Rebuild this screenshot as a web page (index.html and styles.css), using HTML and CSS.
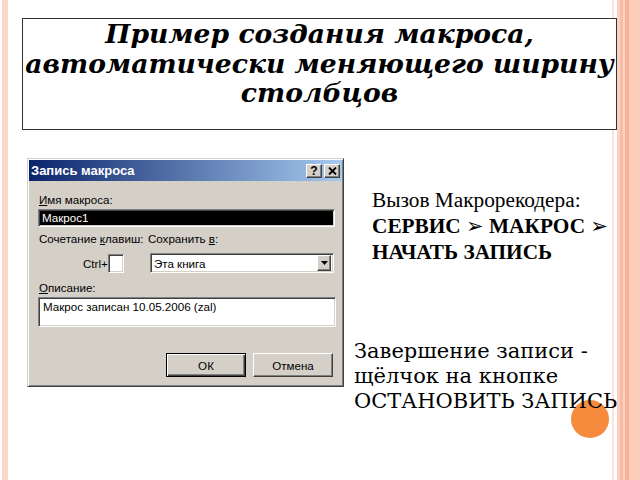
FILE: index.html
```html
<!DOCTYPE html>
<html lang="ru">
<head>
<meta charset="utf-8">
<title>Пример создания макроса</title>
<link rel="stylesheet" href="styles.css">
</head>
<body>
<div class="slide">
  <div class="title">Пример создания макроса,<br>автоматически меняющего ширину<br>столбцов</div>
  <div class="content">
    <div class="dialog">
      <div class="titlebar">
        <span class="tb-text">Запись макроса</span>
        <span class="tb-btns">
          <span class="tb-btn">?</span>
          <span class="tb-btn"><svg width="9" height="8" viewBox="0 0 9 8"><path d="M1 0.5 L8 7.5 M8 0.5 L1 7.5" stroke="#000" stroke-width="1.8"/></svg></span>
        </span>
      </div>
      <div class="dlg-body">
        <div class="lbl lbl-first"><u>И</u>мя макроса:</div>
        <div class="field field-name">Макрос1</div>
        <div class="row2">
          <div class="col-left">
            <div class="lbl">Сочетание <u>к</u>лавиш:</div>
            <div class="ctrl"><span>Ctrl+</span><span class="field keybox"></span></div>
          </div>
          <div class="col-right">
            <div class="lbl">Сохранить <u>в</u>:</div>
            <div class="field combo"><span class="combo-text">Эта книга</span><span class="dd"><svg width="7" height="4" viewBox="0 0 7 4"><path d="M0 0 H7 L3.5 4 Z" fill="#000"/></svg></span></div>
          </div>
        </div>
        <div class="lbl lbl-desc"><u>О</u>писание:</div>
        <div class="field desc">Макрос записан 10.05.2006 (zal)</div>
        <div class="buttons">
          <div class="btn btn-default">ОК</div>
          <div class="btn">Отмена</div>
        </div>
      </div>
    </div>
    <div class="side">
      <div class="call">
        <div>Вызов Макрорекодера:</div>
        <div class="strong">СЕРВИС <span class="arrow">➢</span> МАКРОС <span class="arrow">➢</span></div>
        <div class="strong">НАЧАТЬ ЗАПИСЬ</div>
      </div>
      <div class="finish">
        <div>Завершение записи -</div>
        <div>щёлчок на кнопке</div>
        <div>ОСТАНОВИТЬ ЗАПИСЬ</div>
      </div>
    </div>
  </div>
  <div class="dot"></div>
</div>
</body>
</html>
```
FILE: styles.css
```css
html, body {
  margin: 0;
  padding: 0;
}
body {
  width: 640px;
  height: 480px;
  overflow: hidden;
  background: linear-gradient(to right,
    #fff 0 2px, #fcd8cb 2px 8px, #fff 8px 612px,
    #fde3da 612px 614px, #fff 614px 617px,
    #fcd0bf 617px 620px, #f9bba4 620px 623px,
    #fcd6c8 623px 625px, #f8b195 625px 629px,
    #fccdbb 629px 640px);
}
.slide {
  position: relative;
  width: 640px;
  height: 480px;
  padding-top: 18px;
  box-sizing: border-box;
}
.title {
  margin-left: 22px;
  width: 595px;
  height: 112px;
  box-sizing: border-box;
  border: 1px solid #333;
  background: #fff;
  font-family: "DejaVu Serif", serif;
  font-weight: bold;
  font-style: italic;
  font-size: 26.6px;
  line-height: 29.5px;
  text-align: center;
  color: #000;
  padding-top: 0;
  white-space: nowrap;
}
.content {
  display: flex;
  margin-top: 28px;
}
.dialog {
  margin-left: 27px;
  width: 317px;
  height: 229px;
  box-sizing: border-box;
  background: #d4d0c8;
  border: 1px solid;
  border-color: #d4d0c8 #404040 #404040 #d4d0c8;
  box-shadow: inset 1px 1px #fff, inset -1px -1px #808080;
  padding: 1px;
  font-family: "Liberation Sans", Arial, sans-serif;
  font-size: 11.6px;
  color: #000;
}
.titlebar {
  height: 21px;
  display: flex;
  align-items: center;
  justify-content: space-between;
  padding: 0 2px 0 2px;
  background: linear-gradient(to right, #0a246a, #a6caf0);
}
.tb-text {
  color: #fff;
  font-weight: bold;
  font-size: 13px;
}
.tb-btns {
  display: flex;
  gap: 2px;
}
.tb-btn {
  width: 16px;
  height: 14px;
  box-sizing: border-box;
  background: #d4d0c8;
  border: 1px solid;
  border-color: #fff #404040 #404040 #fff;
  box-shadow: inset -1px -1px #808080;
  display: flex;
  align-items: center;
  justify-content: center;
  font-weight: bold;
  font-size: 12px;
  line-height: 12px;
}
.dlg-body {
  padding: 0 8px 0 9px;
  display: flex;
  flex-direction: column;
}
.lbl {
  height: 14px;
  line-height: 14px;
  padding-left: 1px;
  white-space: nowrap;
}
.lbl-first {
  margin-top: 12px;
}
.field {
  box-sizing: border-box;
  background: #fff;
  border: 1px solid;
  border-color: #808080 #fff #fff #808080;
  box-shadow: inset 1px 1px #404040, inset -1px -1px #d4d0c8;
}
.field-name {
  margin-top: 2px;
  height: 18px;
  width: 297px;
  background: #000;
  color: #fff;
  line-height: 16px;
  padding-left: 3px;
}
.row2 {
  display: flex;
  margin-top: 5px;
}
.col-left {
  width: 110px;
}
.col-right {
  width: 189px;
}
.ctrl {
  display: flex;
  align-items: center;
  padding-left: 45px;
  margin-top: 8px;
}
.keybox {
  width: 16px;
  height: 19px;
}
.combo {
  margin-top: 7px;
  margin-left: 3px;
  height: 20px;
  display: flex;
  align-items: center;
  justify-content: space-between;
  padding: 0 2px 0 3px;
}
.dd {
  width: 14px;
  height: 16px;
  box-sizing: border-box;
  background: #d4d0c8;
  border: 1px solid;
  border-color: #fff #404040 #404040 #fff;
  box-shadow: inset -1px -1px #808080;
  display: flex;
  align-items: center;
  justify-content: center;
}
.lbl-desc {
  margin-top: 8px;
}
.desc {
  margin-top: 2px;
  width: 298px;
  height: 30px;
  padding: 2px 4px;
  line-height: 14px;
}
.buttons {
  display: flex;
  justify-content: flex-end;
  gap: 7px;
  margin-top: 26px;
  padding-right: 1px;
}
.btn {
  width: 80px;
  height: 24px;
  box-sizing: border-box;
  border: 1px solid;
  border-color: #fff #404040 #404040 #fff;
  box-shadow: inset -1px -1px #808080;
  display: flex;
  align-items: center;
  justify-content: center;
}
.btn-default {
  border: 1px solid #000;
  box-shadow: inset 1px 1px #fff, inset -1px -1px #404040, inset -2px -2px #808080;
}
.side {
  margin-left: 10px;
  display: flex;
  flex-direction: column;
  white-space: nowrap;
  position: relative;
  z-index: 1;
}
.call {
  margin-top: 29px;
  padding-left: 18px;
  font-family: "Liberation Serif", "Times New Roman", serif;
  font-size: 21.3px;
  line-height: 26px;
  color: #000;
}
.strong {
  font-weight: bold;
}
.arrow {
  font-family: "DejaVu Sans", sans-serif;
  font-weight: normal;
  font-size: 21px;
  line-height: 0;
}
.finish {
  margin-top: 74px;
  font-family: "DejaVu Serif", serif;
  font-size: 21px;
  line-height: 25px;
  color: #000;
}
.dot {
  position: absolute;
  left: 571px;
  top: 400px;
  width: 38px;
  height: 38px;
  border-radius: 50%;
  background: #f68a3d;
}
```
